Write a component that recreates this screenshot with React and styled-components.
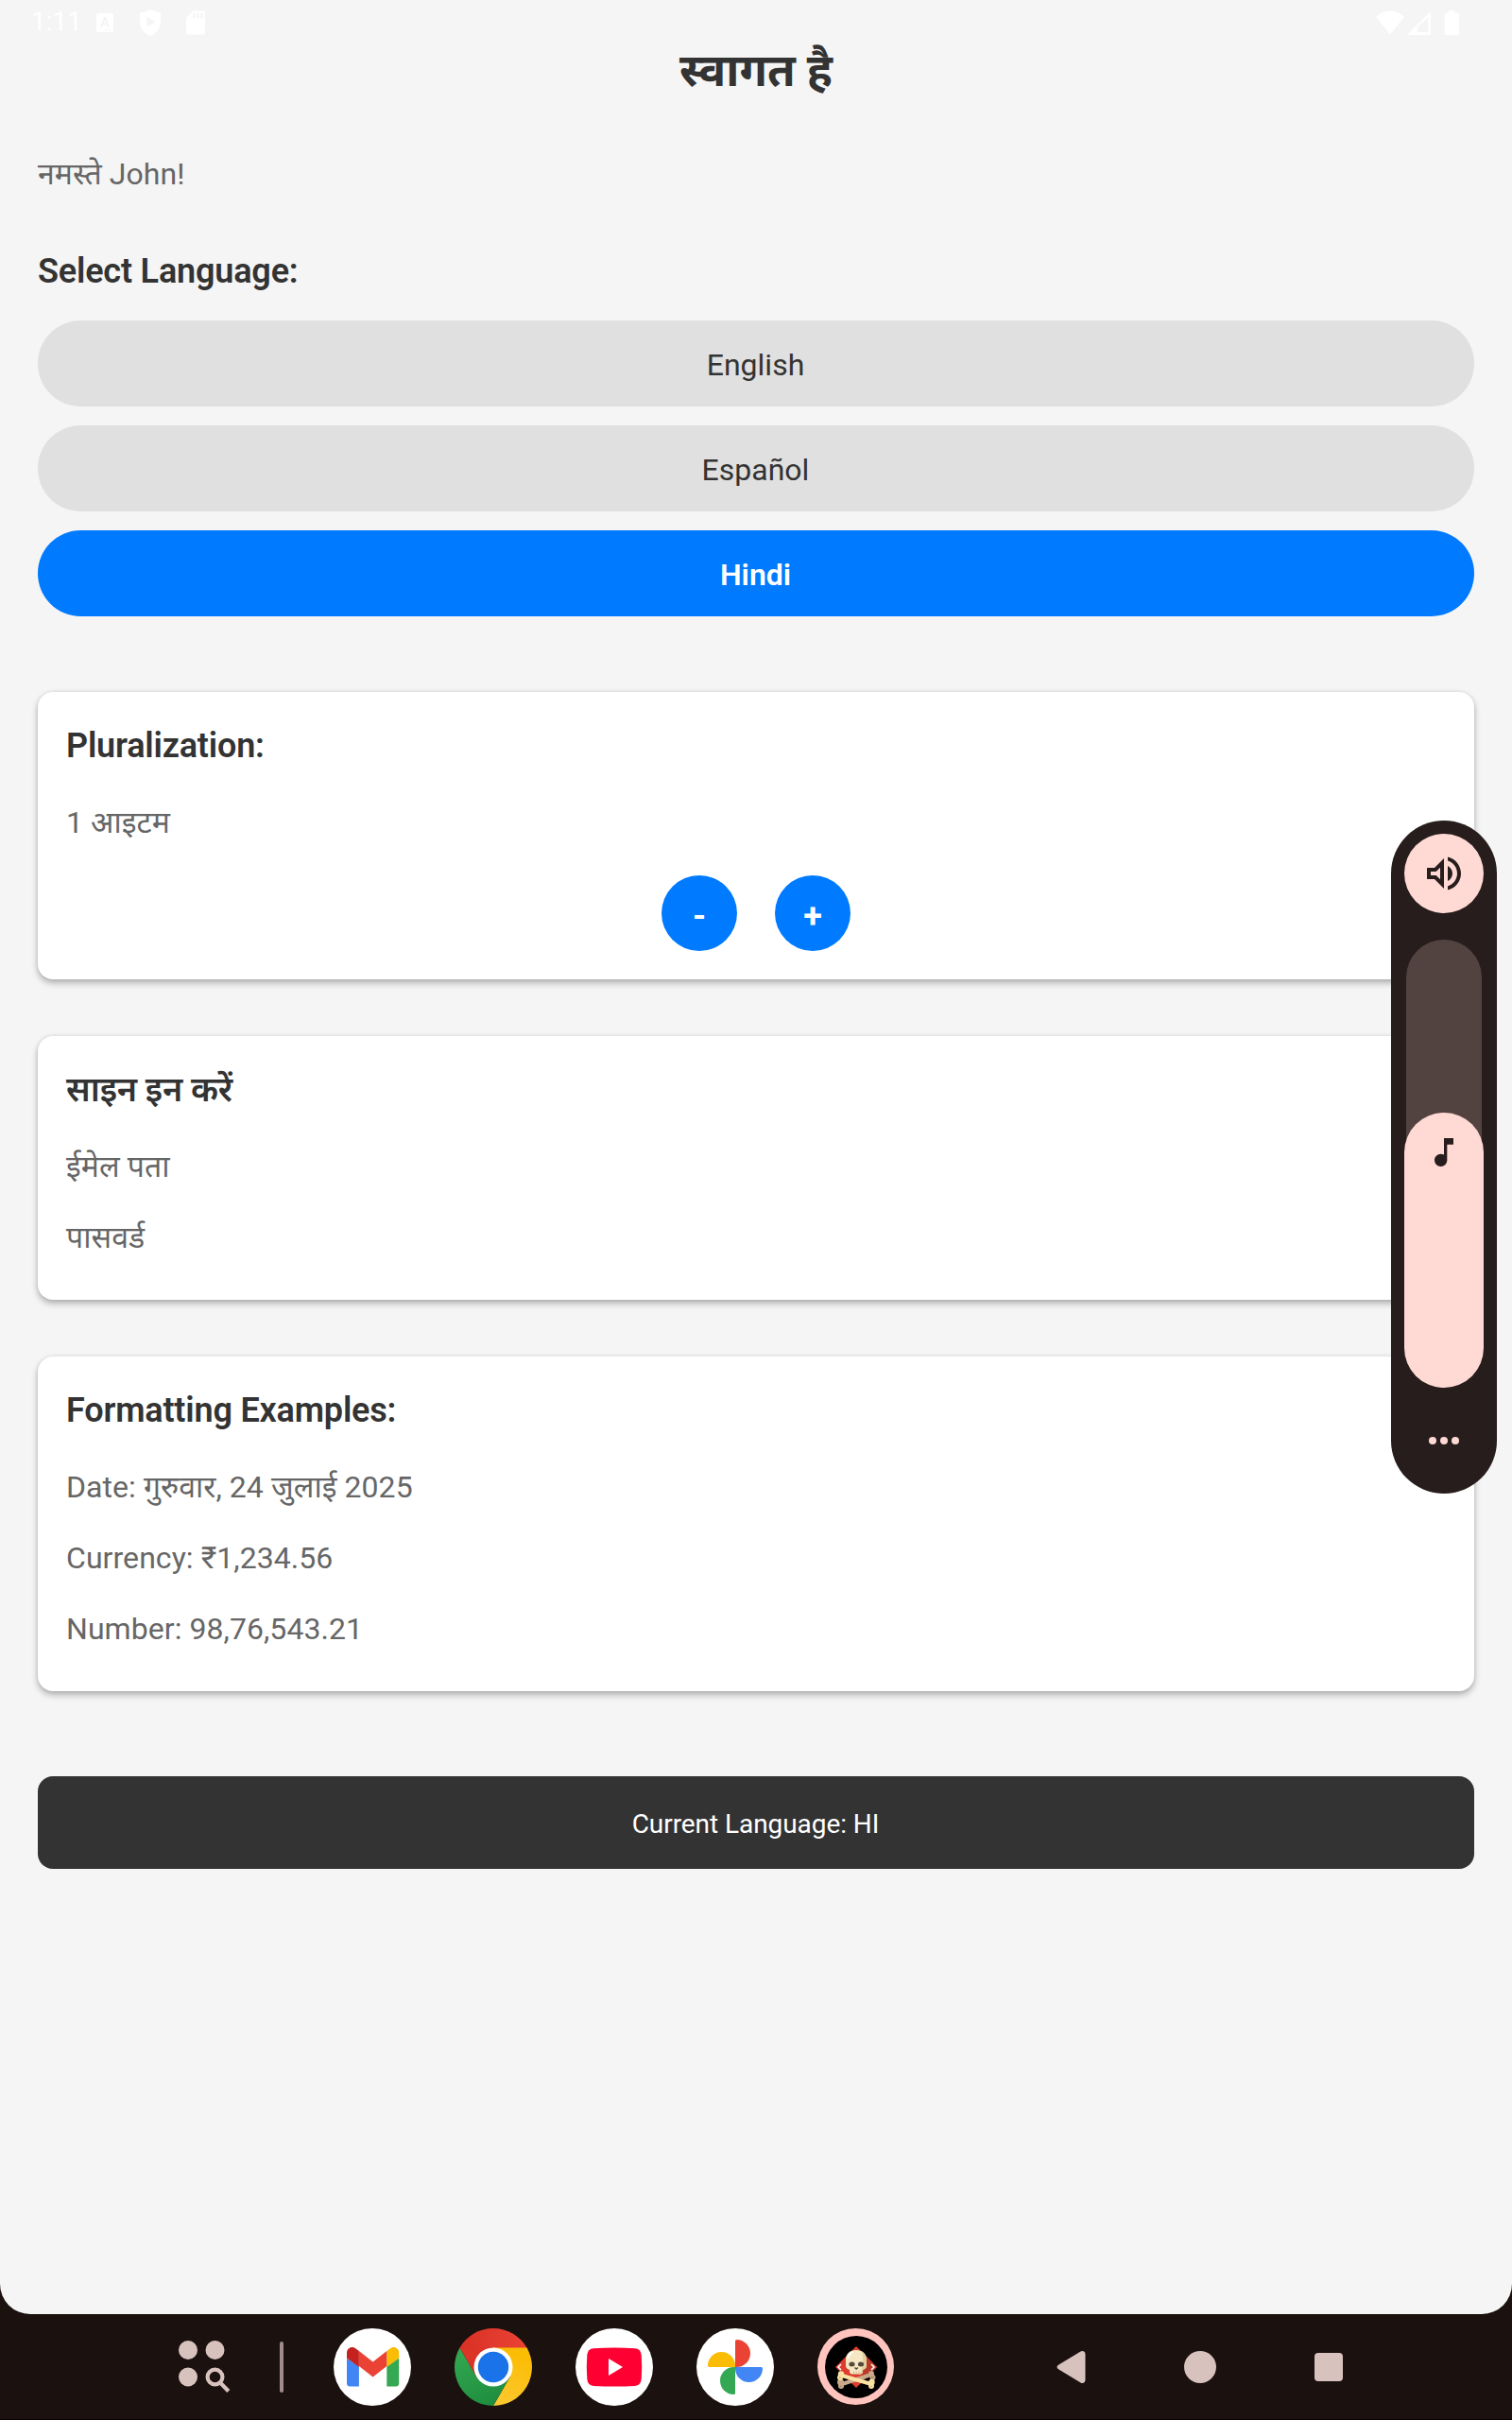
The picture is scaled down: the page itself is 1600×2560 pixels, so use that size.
import React from "react";
import styled, { createGlobalStyle } from "styled-components";

const GlobalStyle = createGlobalStyle`
  * { box-sizing: border-box; }
  body {
    margin: 0;
    background: #1b110f;
    font-family: Roboto, "Noto Sans Devanagari", "Noto Sans", sans-serif;
  }
`;

const Device = styled.div`
  position: relative;
  display: flex;
  flex-direction: column;
  width: 1600px;
  height: 2560px;
  background: #1b110f;
  overflow: hidden;
`;

const Screen = styled.main`
  display: flex;
  flex-direction: column;
  height: 2448px;
  padding: 0 40px;
  background: #f5f5f5;
  border-radius: 0 0 32px 32px;
`;

const StatusBar = styled.header`
  display: flex;
  justify-content: space-between;
  height: 43px;
  margin: 0 -40px;
  padding: 0 56px 0 33px;
  color: #fff;
`;

const Clock = styled.span`
  width: 69px;
  padding-bottom: 2px;
  font-size: 28px;
  line-height: 46px;
`;

const StatusGroup = styled.div`
  display: flex;
  height: 48px;
  align-items: center;
`;

const Title = styled.h1`
  margin: 0 0 55px;
  font-size: 48px;
  line-height: 64px;
  font-weight: 700;
  text-align: center;
  color: #333;
`;

const Body = styled.p`
  margin: 0;
  font-size: 32px;
  line-height: 44px;
  letter-spacing: 0.06px;
  color: #666;
`;

const Heading = styled.h2`
  margin: 0;
  font-size: 36px;
  line-height: 48px;
  font-weight: 600;
  letter-spacing: -0.18px;
  color: #333;
`;

const LanguageSection = styled.section`
  display: flex;
  flex-direction: column;
  margin-top: 57px;
`;

const LanguageList = styled.div`
  display: flex;
  flex-direction: column;
  gap: 20px;
  margin-top: 28px;
`;

const LanguageButton = styled.button`
  height: 91px;
  padding: 3px 1px 0 0;
  border: 0;
  border-radius: 46px;
  font-family: inherit;
  font-size: 32px;
  font-weight: ${(p) => (p.$active ? 600 : 400)};
  color: ${(p) => (p.$active ? "#fff" : "#333")};
  background: ${(p) => (p.$active ? "#007aff" : "#e0e0e0")};
`;

const Cards = styled.div`
  display: flex;
  flex-direction: column;
  gap: 60px;
  margin-top: 80px;
`;

const Card = styled.section`
  display: flex;
  flex-direction: column;
  height: ${(p) => p.$height}px;
  padding: 33px 30px 30px;
  border-radius: 16px;
  background: #fff;
  box-shadow: 0 4px 7px rgba(0, 0, 0, 0.27), 0 0 4px rgba(0, 0, 0, 0.1);
`;

const Lines = styled.div`
  display: flex;
  flex-direction: column;
  gap: 31px;
  margin-top: 35px;
`;

const Stepper = styled.div`
  display: flex;
  justify-content: center;
  gap: 40px;
  margin-top: 34px;
`;

const StepButton = styled.button`
  width: 80px;
  height: 80px;
  padding: 6px 0 0;
  border: 0;
  border-radius: 50%;
  font-family: inherit;
  font-size: 36px;
  font-weight: 700;
  color: #fff;
  background: #007aff;
`;

const Footer = styled.footer`
  display: flex;
  align-items: center;
  justify-content: center;
  height: 98px;
  margin-top: 90px;
  padding: 3px 1px 0 0;
  border-radius: 16px;
  background: #333;
  color: #fff;
  font-size: 28px;
  letter-spacing: -0.06px;
`;

const VolumePanel = styled.aside`
  position: absolute;
  top: 868px;
  right: 16px;
  display: flex;
  flex-direction: column;
  align-items: center;
  width: 112px;
  height: 712px;
  padding: 14px 0;
  border-radius: 56px;
  background: #271d1c;
`;

const RingerButton = styled.div`
  display: flex;
  align-items: center;
  justify-content: center;
  width: 84px;
  height: 84px;
  border-radius: 50%;
  background: #ffdad4;
`;

const VolumeTrack = styled.div`
  display: flex;
  flex-direction: column;
  align-items: center;
  justify-content: flex-end;
  width: 80px;
  height: 474px;
  margin-top: 28px;
  border-radius: 40px;
  background: #534340;
`;

const VolumeLevel = styled.div`
  display: flex;
  justify-content: center;
  flex: none;
  width: 84px;
  height: 291px;
  padding-top: 22px;
  border-radius: 42px;
  background: #ffdad4;
`;

const MoreDots = styled.div`
  display: flex;
  gap: 4px;
  margin-top: 52px;
`;

const Dot = styled.span`
  width: 8px;
  height: 8px;
  border-radius: 50%;
  background: #ffdad4;
`;

const Taskbar = styled.nav`
  display: flex;
  align-items: center;
  height: 112px;
  padding-left: 189px;
  box-shadow: inset 0 -1px #0a0404;
`;

const Divider = styled.span`
  width: 4px;
  height: 54px;
  margin: 0 53px 0 52px;
  border-radius: 2px;
  background: #a08c89;
`;

const AppRow = styled.div`
  display: flex;
  gap: 46px;
`;

const NavRow = styled.div`
  display: flex;
  align-items: center;
  margin-left: 171px;
  gap: 103px;
`;

const Icon = styled.svg`
  display: block;
  flex: none;
  overflow: visible;
`;

function StatusIcons() {
  return (
    <StatusBar>
      <StatusGroup>
        <Clock>1:11</Clock>
        <Icon width="115" height="28" viewBox="102 10 115 28" fill="#fff">
          <path fillRule="evenodd" d="M103.500 14h15a1.500 1.500 0 0 1 1.500 1.500v17a1.500 1.500 0 0 1-1.500 1.500h-15a1.500 1.500 0 0 1-1.500-1.500v-17a1.500 1.500 0 0 1 1.500-1.500zM109.700 18l-3.700 11h2.400l.8-2.500h3.600l.8 2.500h2.400l-3.700-11zm1.300 2.800 1.200 3.800h-2.400zM111 31v1.500h2V31zm3 0v1.500h2V31zm3 0v1.500h2V31z" />
          <path fillRule="evenodd" d="M159 10l11 4v9c0 7-4.600 12.600-11 15-6.400-2.400-11-8-11-15v-9zM155.500 17.500v11l9-5.500z" />
          <path fillRule="evenodd" d="M204.500 11.500h10.500a2 2 0 0 1 2 2v21a2 2 0 0 1-2 2h-16a2 2 0 0 1-2-2v-15.500zM204.300 14v5h2.700v-5zm3.900 0v5h2.700v-5zm3.900 0v5h2.700v-5z" />
        </Icon>
      </StatusGroup>
      <StatusGroup>
        <Icon width="88" height="28" viewBox="1456 10 88 28" fill="#fff">
          <path d="M1471 36.500l-15-18.500c4.300-4.200 9.500-6.500 15-6.500s10.700 2.300 15 6.500z" />
          <path fillRule="evenodd" d="M1514 12v25h-25zM1511.300 18v16h-11.600v-4.800z" />
          <path d="M1533 11h6v2.500h3.500a1.500 1.500 0 0 1 1.500 1.500v20.500a1.500 1.500 0 0 1-1.500 1.500h-12.500a1.500 1.500 0 0 1-1.500-1.500V15a1.500 1.500 0 0 1 1.500-1.500h3z" />
        </Icon>
      </StatusGroup>
    </StatusBar>
  );
}

function SearchAppsIcon() {
  return (
    <Icon width="55" height="56" viewBox="0 0 55 56" fill="#d8c2be">
      <circle cx="10" cy="10" r="10" />
      <circle cx="38.500" cy="10" r="10" />
      <circle cx="10" cy="38.500" r="10" />
      <g fill="none" stroke="#d8c2be" strokeWidth="4.200">
        <circle cx="38.500" cy="38.500" r="7.900" />
        <path d="M44 44.500l8.800 9" />
      </g>
    </Icon>
  );
}

function GmailIcon() {
  return (
    <Icon width="82" height="82" viewBox="0 0 82 82">
      <circle cx="41" cy="41" r="41" fill="#fff" />
      <path d="M14 31.500v26.500a3.600 3.600 0 0 0 3.600 3.600h9.300V40.500z" fill="#4285f4" />
      <path d="M56.300 61.600h9.300a3.600 3.600 0 0 0 3.600-3.600V31.500l-12.900 9z" fill="#34a853" />
      <path d="M14 31.500v-5.500c0-5 5.400-7.600 9.500-4.600l3.400 2.700v16.900z" fill="#c5221f" />
      <path d="M69.200 31.500v-5.500c0-5-5.400-7.600-9.500-4.600l-3.400 2.700v16.900z" fill="#fbbc04" />
      <path d="M26.900 24.100l14.700 11.300 14.700-11.300v16L41.600 51.500 26.900 40.100z" fill="#ea4335" />
    </Icon>
  );
}

function ChromeIcon() {
  return (
    <Icon width="82" height="82" viewBox="0 0 82 82">
      <defs>
        <linearGradient id="chromeRed" x1="0" y1="0" x2="1" y2="0">
          <stop offset="0" stopColor="#d93025" />
          <stop offset="1" stopColor="#ea4335" />
        </linearGradient>
        <linearGradient id="chromeYellow" x1="0" y1="1" x2="0.300" y2="0">
          <stop offset="0" stopColor="#fcc934" />
          <stop offset="1" stopColor="#fbbc04" />
        </linearGradient>
        <linearGradient id="chromeGreen" x1="0.600" y1="1" x2="0.100" y2="0">
          <stop offset="0" stopColor="#1e8e3e" />
          <stop offset="1" stopColor="#34a853" />
        </linearGradient>
      </defs>
      <path d="M41 41L5.500 20.500A41 41 0 0 1 76.500 20.500z" fill="url(#chromeRed)" />
      <path d="M41 20.500h35.500A41 41 0 0 1 41 82L58.750 51.250z" fill="url(#chromeYellow)" />
      <path d="M23.250 51.250L5.500 20.500A41 41 0 0 0 41 82l17.750-30.750L41 41z" fill="url(#chromeGreen)" />
      <path d="M5.500 20.500L23.250 51.250 41 41V20.500z" fill="#dc3528" />
      <circle cx="41" cy="41" r="20.500" fill="#fff" />
      <circle cx="41" cy="41" r="16.200" fill="#1a73e8" />
    </Icon>
  );
}

function YouTubeIcon() {
  return (
    <Icon width="82" height="82" viewBox="0 0 82 82">
      <circle cx="41" cy="41" r="41" fill="#fff" />
      <path d="M19 21.200Q41 20 63 21.200 69 21.700 69.700 28 70.700 41 69.700 54 69 60.300 63 60.900 41 62 19 60.900 13 60.300 12.300 54 11.300 41 12.300 28 13 21.700 19 21.200z" fill="#ff0033" />
      <path d="M35 32l15 9-15 9z" fill="#fff" />
    </Icon>
  );
}

function PhotosIcon() {
  return (
    <Icon width="82" height="82" viewBox="0 0 82 82">
      <circle cx="41" cy="41" r="41" fill="#fff" />
      <path d="M41 41V13.500a1.500 1.500 0 0 1 1.500-1.500 14.500 14.500 0 0 1 0 29z" fill="#ea4335" />
      <path d="M41 41H68.500a1.500 1.500 0 0 1 1.500 1.500 14.500 14.500 0 0 1-29 0z" fill="#4285f4" />
      <path d="M41 41V68.500a1.500 1.500 0 0 1-1.500 1.500 14.500 14.500 0 0 1 0-29z" fill="#34a853" />
      <path d="M41 41H13.500a1.500 1.500 0 0 1-1.500-1.500 14.500 14.500 0 0 1 29 0z" fill="#fbbc04" />
    </Icon>
  );
}

function SkullIcon() {
  return (
    <Icon width="82" height="82" viewBox="0 0 82 82">
      <circle cx="40.500" cy="40.500" r="40.500" fill="#ffc4be" />
      <circle cx="41" cy="41" r="33" fill="#000" />
      <path d="M41 19L63 41 41 63 19 41z" fill="#dc3d2e" />
      <path d="M41 63L63 41 53 31 44 60z" fill="#b93a2b" />
      <g fill="none" stroke="#fff" strokeWidth="1.600">
        <path d="M25 38l-3 3 3 3" />
        <path d="M57 38l3 3-3 3" />
      </g>
      <g stroke="#c9a98a" strokeWidth="4" strokeLinecap="round" fill="#c9a98a">
        <path d="M26 59l31-10" />
        <circle cx="24.500" cy="57" r="1.500" />
        <circle cx="25" cy="61" r="1" />
        <circle cx="57" cy="48" r="1" />
        <circle cx="58.500" cy="52" r="1" />
      </g>
      <path d="M30 33c0-6 4.500-10 11-10s11 4 11 10v6c0 3-1.500 4-4 5v3l-2 1.500h-10l-2-1.500v-3c-2.500-1-4-2-4-5z" fill="#f5e7c3" />
      <path d="M47 24.500c3 1.700 5 4.700 5 8.500v6c0 3-1.500 4-4 5v3l-2 1.500h-1.500c3-4 5-14 2.500-24z" fill="#e2cf9f" />
      <path d="M32.500 31c.5-2.600 2-4.600 4.500-5.500" fill="none" stroke="#fff" strokeWidth="1.800" strokeLinecap="round" />
      <ellipse cx="36.500" cy="38" rx="3.100" ry="2.500" fill="#564a3c" />
      <ellipse cx="46" cy="38" rx="3.100" ry="2.500" fill="#564a3c" />
      <path d="M39.500 41.500l1.700 1.500 1.700-1.500" fill="none" stroke="#564a3c" strokeWidth="1.400" />
      <path d="M38.500 45.500v3M41.200 45.500v3M44 45.500v3" stroke="#c9a98a" strokeWidth="0.800" />
      <g stroke="#fbe3a4" strokeWidth="4" strokeLinecap="round" fill="#fbe3a4">
        <path d="M26 50l31 9" />
        <circle cx="25" cy="48.500" r="1.200" />
        <circle cx="24" cy="52" r="1" />
        <circle cx="57.500" cy="57" r="1.200" />
        <circle cx="57" cy="61" r="1" />
      </g>
    </Icon>
  );
}

export default function App() {
  return (
    <>
      <GlobalStyle />
      <Device>
        <Screen>
          <StatusIcons />
          <Title>स्वागत है</Title>
          <Body>नमस्ते John!</Body>
          <LanguageSection>
            <Heading>Select Language:</Heading>
            <LanguageList>
              <LanguageButton>English</LanguageButton>
              <LanguageButton>Español</LanguageButton>
              <LanguageButton $active>Hindi</LanguageButton>
            </LanguageList>
          </LanguageSection>
          <Cards>
            <Card $height={304}>
              <Heading>Pluralization:</Heading>
              <Lines>
                <Body>1 आइटम</Body>
              </Lines>
              <Stepper>
                <StepButton>-</StepButton>
                <StepButton>+</StepButton>
              </Stepper>
            </Card>
            <Card $height={279}>
              <Heading>साइन इन करें</Heading>
              <Lines>
                <Body>ईमेल पता</Body>
                <Body>पासवर्ड</Body>
              </Lines>
            </Card>
            <Card $height={354}>
              <Heading>Formatting Examples:</Heading>
              <Lines>
                <Body>Date: गुरुवार, 24 जुलाई 2025</Body>
                <Body>Currency: ₹1,234.56</Body>
                <Body>Number: 98,76,543.21</Body>
              </Lines>
            </Card>
          </Cards>
          <Footer>Current Language: HI</Footer>
        </Screen>
        <Taskbar>
          <SearchAppsIcon />
          <Divider />
          <AppRow>
            <GmailIcon />
            <ChromeIcon />
            <YouTubeIcon />
            <PhotosIcon />
            <SkullIcon />
          </AppRow>
          <NavRow>
            <Icon width="32" height="34" viewBox="0 0 32 34" fill="#d8c2be">
              <path d="M2 14.800L25.500.6c2.500-1.500 5 0 5 2.800v27.200c0 2.800-2.500 4.300-5 2.800L2 19.200c-2-1.200-2-3.200 0-4.400z" />
            </Icon>
            <Icon width="34" height="34" viewBox="0 0 34 34" fill="#d8c2be">
              <circle cx="17" cy="17" r="17" />
            </Icon>
            <Icon width="34" height="34" viewBox="0 0 34 34" fill="#d8c2be">
              <rect x="1" y="2" width="30" height="30" rx="4" />
            </Icon>
          </NavRow>
        </Taskbar>
        <VolumePanel>
          <RingerButton>
            <Icon width="48" height="48" viewBox="0 0 24 24" fill="#271d1c">
              <path d="M3 9v6h4l5 5V4L7 9H3zm7-.17v6.340L7.830 13H5v-2h2.830L10 8.830zM16.500 12c0-1.770-1.020-3.290-2.500-4.030v8.050c1.480-.73 2.500-2.250 2.500-4.020zM14 3.230v2.060c2.890.86 5 3.540 5 6.710s-2.110 5.850-5 6.710v2.060c4.010-.91 7-4.490 7-8.770s-2.990-7.860-7-8.770z" />
            </Icon>
          </RingerButton>
          <VolumeTrack>
            <VolumeLevel>
              <Icon width="40" height="40" viewBox="0 0 24 24" fill="#271d1c">
                <path d="M12 3v10.550c-.59-.34-1.270-.55-2-.55-2.210 0-4 1.790-4 4s1.790 4 4 4 4-1.790 4-4V7h4V3h-6z" />
              </Icon>
            </VolumeLevel>
          </VolumeTrack>
          <MoreDots>
            <Dot />
            <Dot />
            <Dot />
          </MoreDots>
        </VolumePanel>
      </Device>
    </>
  );
}
